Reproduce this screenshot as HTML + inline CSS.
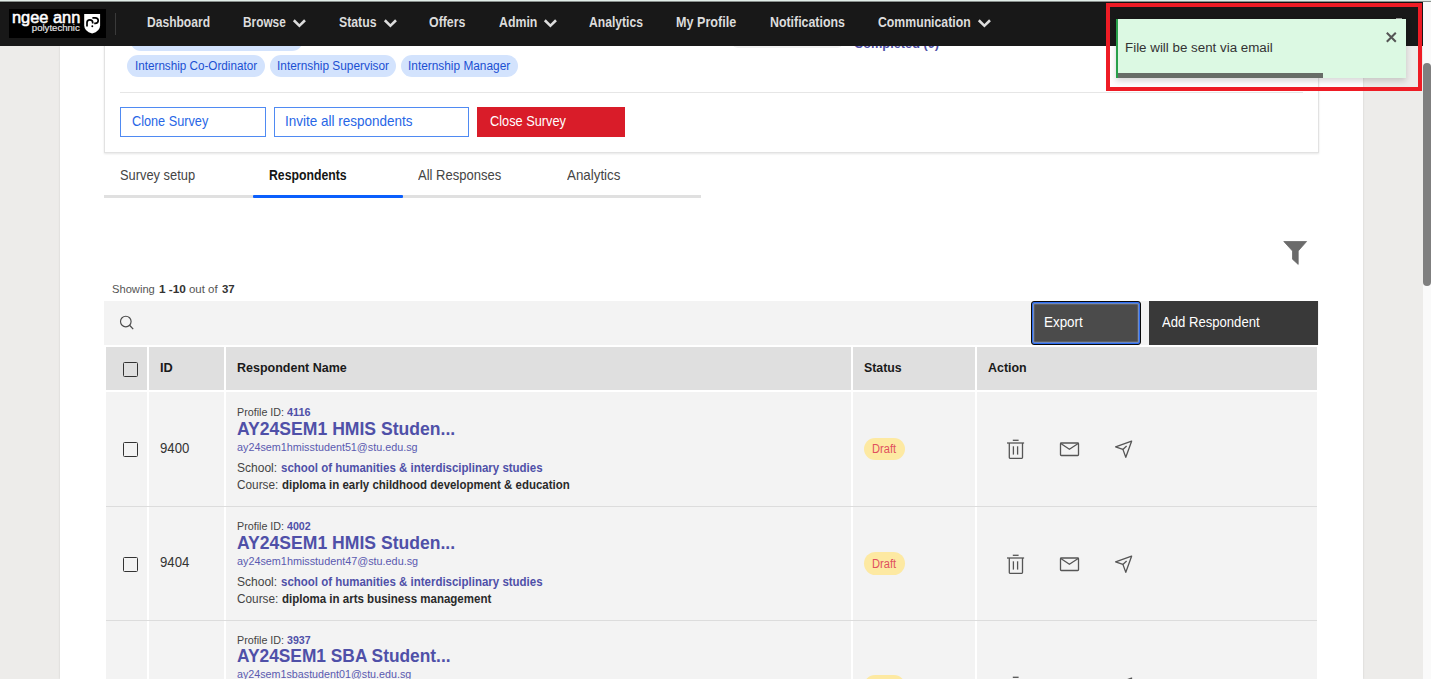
<!DOCTYPE html>
<html><head><meta charset="utf-8"><style>
html,body{margin:0;padding:0;width:1431px;height:679px;overflow:hidden;background:#ededed;font-family:"Liberation Sans", sans-serif;}
.t{position:absolute;white-space:nowrap;line-height:1;transform-origin:0 0;}
.r{position:absolute;}
</style></head><body>
<div class="r" style="left:0.00px;top:0.00px;width:1423.00px;height:679.00px;background:#edecea;"></div>
<div class="r" style="left:60.00px;top:46.00px;width:1303.00px;height:633.00px;background:#ffffff;box-shadow:0 0 2px rgba(0,0,0,0.12);"></div>
<div class="r" style="left:1423.00px;top:0.00px;width:8.00px;height:679.00px;background:#fafafa;"></div>
<div class="r" style="left:1423.00px;top:62.80px;width:8.00px;height:222.80px;background:#7f7f7f;border-radius:4px;"></div>
<div class="r" style="left:104.00px;top:20.00px;width:1215.00px;height:132.50px;background:#ffffff;border:1px solid #e2e2e2;box-sizing:border-box;box-shadow:0 1px 2px rgba(0,0,0,0.10);"></div>
<div class="r" style="left:130.00px;top:28.50px;width:172.50px;height:22.50px;background:#d3e3fd;border-radius:11px;"></div>
<div class="r" style="left:732.00px;top:30.00px;width:111.00px;height:18.00px;background:#f1f1f1;border-radius:6px;"></div>
<div class="t" style="left:853.60px;top:37.00px;font-size:13.5px;font-weight:bold;color:#4e4fa6;transform:scaleX(0.9452);">Completed (0)</div>
<div class="r" style="left:127.40px;top:54.50px;width:137.90px;height:22.50px;background:#d3e3fd;border-radius:11.5px;"></div>
<div class="t" style="left:134.73px;top:60.00px;font-size:12.0px;font-weight:normal;color:#1b4fd2;transform:scaleX(0.9735);">Internship Co-Ordinator</div>
<div class="r" style="left:270.20px;top:54.50px;width:126.20px;height:22.50px;background:#d3e3fd;border-radius:11.5px;"></div>
<div class="t" style="left:276.61px;top:60.00px;font-size:12.0px;font-weight:normal;color:#1b4fd2;transform:scaleX(0.9876);">Internship Supervisor</div>
<div class="r" style="left:401.30px;top:54.50px;width:116.70px;height:22.50px;background:#d3e3fd;border-radius:11.5px;"></div>
<div class="t" style="left:407.71px;top:60.00px;font-size:12.0px;font-weight:normal;color:#1b4fd2;transform:scaleX(0.9883);">Internship Manager</div>
<div class="r" style="left:120.00px;top:92.00px;width:1183.00px;height:1.00px;background:#e6e6e6;"></div>
<div class="r" style="left:120.00px;top:107.00px;width:146.00px;height:30.00px;background:#ffffff;border:1px solid #4f8af2;box-sizing:border-box;"></div>
<div class="t" style="left:132.30px;top:115.00px;font-size:13.9px;font-weight:normal;color:#2766e6;transform:scaleX(0.9144);">Clone Survey</div>
<div class="r" style="left:274.00px;top:107.00px;width:195.00px;height:30.00px;background:#ffffff;border:1px solid #4f8af2;box-sizing:border-box;"></div>
<div class="t" style="left:284.53px;top:115.00px;font-size:13.9px;font-weight:normal;color:#2766e6;transform:scaleX(0.9707);">Invite all respondents</div>
<div class="r" style="left:477.00px;top:107.00px;width:148.00px;height:30.00px;background:#d91c29;"></div>
<div class="t" style="left:490.30px;top:115.00px;font-size:13.9px;font-weight:normal;color:#ffffff;transform:scaleX(0.9194);">Close Survey</div>
<div class="r" style="left:104.00px;top:195.20px;width:597.00px;height:3.00px;background:#e0e0e0;"></div>
<div class="r" style="left:253.20px;top:195.00px;width:149.80px;height:3.10px;background:#0b5ffd;border-radius:1px;"></div>
<div class="t" style="left:119.70px;top:169.00px;font-size:13.9px;font-weight:normal;color:#444;transform:scaleX(0.9257);">Survey setup</div>
<div class="t" style="left:268.90px;top:169.00px;font-size:13.9px;font-weight:bold;color:#151515;transform:scaleX(0.8826);">Respondents</div>
<div class="t" style="left:417.90px;top:169.00px;font-size:13.9px;font-weight:normal;color:#444;transform:scaleX(0.9365);">All Responses</div>
<div class="t" style="left:567.30px;top:169.00px;font-size:13.9px;font-weight:normal;color:#444;transform:scaleX(0.9616);">Analytics</div>
<svg class="r" style="left:1280px;top:238px" width="30" height="30" viewBox="1280 238 30 30"><polygon points="1283.8,241.5 1306.6,241.5 1298.2,251 1298.2,264.4 1292.5,259.2 1292.5,251" fill="#6b6b6b" stroke="#6b6b6b" stroke-width="0.8" stroke-linejoin="round"/></svg>
<div class="t" style="left:112.10px;top:284.00px;font-size:11.0px;font-weight:normal;color:#555;transform:scaleX(1.0148);">Showing</div>
<div class="t" style="left:158.70px;top:284.00px;font-size:11.0px;font-weight:bold;color:#333;transform:scaleX(1.0740);">1 -10</div>
<div class="t" style="left:188.90px;top:284.00px;font-size:11.0px;font-weight:normal;color:#555;transform:scaleX(1.0399);">out of</div>
<div class="t" style="left:221.60px;top:284.00px;font-size:11.0px;font-weight:bold;color:#333;transform:scaleX(1.0398);">37</div>
<div class="r" style="left:104.00px;top:300.70px;width:1215.00px;height:44.30px;background:#f3f3f3;"></div>
<svg class="r" style="left:115px;top:312px" width="24" height="24" viewBox="115 312 24 24"><circle cx="125.8" cy="321.5" r="5.3" fill="none" stroke="#4a4a4a" stroke-width="1.15"/><line x1="129.6" y1="325.3" x2="133.2" y2="329.1" stroke="#4a4a4a" stroke-width="1.25"/></svg>
<div class="r" style="left:1031.20px;top:300.60px;width:110.20px;height:44.40px;background:#4b4b4b;border:1.6px solid #0a0a0a;box-sizing:border-box;box-shadow:inset 0 0 0 1.4px #2c6cf0, inset 0 0 0 2.2px rgba(240,235,225,0.55);border-radius:3px;"></div>
<div class="t" style="left:1043.95px;top:315.00px;font-size:14.1px;font-weight:normal;color:#ffffff;transform:scaleX(0.9519);">Export</div>
<div class="r" style="left:1149.30px;top:300.80px;width:169.00px;height:44.40px;background:#393939;"></div>
<div class="t" style="left:1162.30px;top:315.00px;font-size:14.1px;font-weight:normal;color:#ffffff;transform:scaleX(0.9297);">Add Respondent</div>
<div class="r" style="left:106.00px;top:347.00px;width:41.00px;height:43.00px;background:#dfdfdf;"></div>
<div class="r" style="left:148.50px;top:347.00px;width:75.50px;height:43.00px;background:#dfdfdf;"></div>
<div class="r" style="left:225.50px;top:347.00px;width:625.50px;height:43.00px;background:#dfdfdf;"></div>
<div class="r" style="left:852.50px;top:347.00px;width:122.50px;height:43.00px;background:#dfdfdf;"></div>
<div class="r" style="left:976.50px;top:347.00px;width:340.50px;height:43.00px;background:#dfdfdf;"></div>
<div class="r" style="left:123.00px;top:362.00px;width:15.00px;height:15.00px;background:transparent;border:1.5px solid #333;box-sizing:border-box;border-radius:1.5px;"></div>
<div class="t" style="left:159.80px;top:362.00px;font-size:12.6px;font-weight:bold;color:#1a1a1a;transform:scaleX(1.0161);">ID</div>
<div class="t" style="left:236.80px;top:362.00px;font-size:12.6px;font-weight:bold;color:#1a1a1a;transform:scaleX(0.9922);">Respondent Name</div>
<div class="t" style="left:863.80px;top:362.00px;font-size:12.6px;font-weight:bold;color:#1a1a1a;transform:scaleX(0.9796);">Status</div>
<div class="t" style="left:987.90px;top:362.00px;font-size:12.6px;font-weight:bold;color:#1a1a1a;transform:scaleX(0.9874);">Action</div>
<div class="r" style="left:106.00px;top:391.50px;width:41.00px;height:114.80px;background:#f3f3f3;"></div>
<div class="r" style="left:148.50px;top:391.50px;width:75.50px;height:114.80px;background:#f3f3f3;"></div>
<div class="r" style="left:225.50px;top:391.50px;width:625.50px;height:114.80px;background:#f3f3f3;"></div>
<div class="r" style="left:852.50px;top:391.50px;width:122.50px;height:114.80px;background:#f3f3f3;"></div>
<div class="r" style="left:976.50px;top:391.50px;width:340.50px;height:114.80px;background:#f3f3f3;"></div>
<div class="r" style="left:106.00px;top:506.30px;width:1211.00px;height:1.00px;background:#dcdcdc;"></div>
<div class="r" style="left:123.00px;top:442.30px;width:15.00px;height:15.00px;background:transparent;border:1.5px solid #333;box-sizing:border-box;border-radius:1.5px;"></div>
<div class="t" style="left:159.80px;top:441.00px;font-size:14.0px;font-weight:normal;color:#333;transform:scaleX(0.9407);">9400</div>
<div class="t" style="left:236.70px;top:408.00px;font-size:10.2px;font-weight:normal;color:#444;transform:scaleX(1.0525);">Profile ID:</div>
<div class="t" style="left:287.40px;top:408.00px;font-size:10.2px;font-weight:bold;color:#4f50a8;transform:scaleX(1.0698);">4116</div>
<div class="t" style="left:236.70px;top:421.00px;font-size:17.7px;font-weight:bold;color:#4f50a8;transform:scaleX(0.9941);">AY24SEM1 HMIS Studen...</div>
<div class="t" style="left:236.70px;top:442.00px;font-size:11.3px;font-weight:normal;color:#5a5ab0;transform:scaleX(0.9544);">ay24sem1hmisstudent51@stu.edu.sg</div>
<div class="t" style="left:236.80px;top:462.00px;font-size:12.0px;font-weight:normal;color:#444;transform:scaleX(1.0027);">School:</div>
<div class="t" style="left:280.80px;top:462.00px;font-size:12.0px;font-weight:bold;color:#4f50a8;transform:scaleX(0.9568);">school of humanities &amp; interdisciplinary studies</div>
<div class="t" style="left:236.80px;top:479.00px;font-size:12.0px;font-weight:normal;color:#444;transform:scaleX(0.9836);">Course:</div>
<div class="t" style="left:282.40px;top:479.00px;font-size:12.0px;font-weight:bold;color:#2a2a2a;transform:scaleX(0.9544);">diploma in early childhood development &amp; education</div>
<div class="r" style="left:863.50px;top:437.70px;width:41.30px;height:22.60px;background:#fde9a2;border-radius:11.5px;"></div>
<div class="t" style="left:871.50px;top:443.00px;font-size:12.0px;font-weight:normal;color:#e0505e;transform:scaleX(0.9261);">Draft</div>
<svg class="r" style="left:1000px;top:435.00px" width="140" height="28" viewBox="1000 435 140 28" fill="none" stroke="#555" stroke-width="1.3" stroke-linejoin="round">
<line x1="1012.8" y1="440.3" x2="1018.6" y2="440.3"/>
<line x1="1007" y1="443" x2="1024.1" y2="443"/>
<path d="M1009.3 443 V457.6 Q1009.3 458.3 1010 458.3 H1021.8 Q1022.5 458.3 1022.5 457.6 V443"/>
<line x1="1013.4" y1="446.3" x2="1013.4" y2="454.6"/>
<line x1="1017.6" y1="446.3" x2="1017.6" y2="454.6"/>
<rect x="1060.5" y="443" width="18" height="12.5" rx="0.8"/>
<polyline points="1060.8,443.5 1069.4,449.3 1078.2,443.5"/>
<path d="M1131.6 441.2 L1115.6 446.9 L1122.9 449.4 L1125.8 457.3 Z"/>
<line x1="1122.9" y1="449.4" x2="1126.6" y2="446"/>
</svg>
<div class="r" style="left:106.00px;top:507.30px;width:41.00px;height:112.70px;background:#f3f3f3;"></div>
<div class="r" style="left:148.50px;top:507.30px;width:75.50px;height:112.70px;background:#f3f3f3;"></div>
<div class="r" style="left:225.50px;top:507.30px;width:625.50px;height:112.70px;background:#f3f3f3;"></div>
<div class="r" style="left:852.50px;top:507.30px;width:122.50px;height:112.70px;background:#f3f3f3;"></div>
<div class="r" style="left:976.50px;top:507.30px;width:340.50px;height:112.70px;background:#f3f3f3;"></div>
<div class="r" style="left:106.00px;top:620.00px;width:1211.00px;height:1.00px;background:#dcdcdc;"></div>
<div class="r" style="left:123.00px;top:556.80px;width:15.00px;height:15.00px;background:transparent;border:1.5px solid #333;box-sizing:border-box;border-radius:1.5px;"></div>
<div class="t" style="left:159.80px;top:555.00px;font-size:14.0px;font-weight:normal;color:#333;transform:scaleX(0.9407);">9404</div>
<div class="t" style="left:236.70px;top:522.00px;font-size:10.2px;font-weight:normal;color:#444;transform:scaleX(1.0525);">Profile ID:</div>
<div class="t" style="left:287.40px;top:522.00px;font-size:10.2px;font-weight:bold;color:#4f50a8;transform:scaleX(1.0436);">4002</div>
<div class="t" style="left:236.70px;top:535.00px;font-size:17.7px;font-weight:bold;color:#4f50a8;transform:scaleX(0.9936);">AY24SEM1 HMIS Studen...</div>
<div class="t" style="left:236.70px;top:556.00px;font-size:11.3px;font-weight:normal;color:#5a5ab0;transform:scaleX(0.9571);">ay24sem1hmisstudent47@stu.edu.sg</div>
<div class="t" style="left:236.80px;top:576.00px;font-size:12.0px;font-weight:normal;color:#444;transform:scaleX(1.0027);">School:</div>
<div class="t" style="left:280.80px;top:576.00px;font-size:12.0px;font-weight:bold;color:#4f50a8;transform:scaleX(0.9568);">school of humanities &amp; interdisciplinary studies</div>
<div class="t" style="left:236.80px;top:593.00px;font-size:12.0px;font-weight:normal;color:#444;transform:scaleX(0.9836);">Course:</div>
<div class="t" style="left:282.40px;top:593.00px;font-size:12.0px;font-weight:bold;color:#2a2a2a;transform:scaleX(0.9598);">diploma in arts business management</div>
<div class="r" style="left:863.50px;top:552.20px;width:41.30px;height:22.60px;background:#fde9a2;border-radius:11.5px;"></div>
<div class="t" style="left:871.50px;top:558.00px;font-size:12.0px;font-weight:normal;color:#e0505e;transform:scaleX(0.9261);">Draft</div>
<svg class="r" style="left:1000px;top:549.50px" width="140" height="28" viewBox="1000 435 140 28" fill="none" stroke="#555" stroke-width="1.3" stroke-linejoin="round">
<line x1="1012.8" y1="440.3" x2="1018.6" y2="440.3"/>
<line x1="1007" y1="443" x2="1024.1" y2="443"/>
<path d="M1009.3 443 V457.6 Q1009.3 458.3 1010 458.3 H1021.8 Q1022.5 458.3 1022.5 457.6 V443"/>
<line x1="1013.4" y1="446.3" x2="1013.4" y2="454.6"/>
<line x1="1017.6" y1="446.3" x2="1017.6" y2="454.6"/>
<rect x="1060.5" y="443" width="18" height="12.5" rx="0.8"/>
<polyline points="1060.8,443.5 1069.4,449.3 1078.2,443.5"/>
<path d="M1131.6 441.2 L1115.6 446.9 L1122.9 449.4 L1125.8 457.3 Z"/>
<line x1="1122.9" y1="449.4" x2="1126.6" y2="446"/>
</svg>
<div class="r" style="left:106.00px;top:621.00px;width:41.00px;height:139.00px;background:#f3f3f3;"></div>
<div class="r" style="left:148.50px;top:621.00px;width:75.50px;height:139.00px;background:#f3f3f3;"></div>
<div class="r" style="left:225.50px;top:621.00px;width:625.50px;height:139.00px;background:#f3f3f3;"></div>
<div class="r" style="left:852.50px;top:621.00px;width:122.50px;height:139.00px;background:#f3f3f3;"></div>
<div class="r" style="left:976.50px;top:621.00px;width:340.50px;height:139.00px;background:#f3f3f3;"></div>
<div class="r" style="left:106.00px;top:760.00px;width:1211.00px;height:1.00px;background:#dcdcdc;"></div>
<div class="r" style="left:123.00px;top:679.30px;width:15.00px;height:15.00px;background:transparent;border:1.5px solid #333;box-sizing:border-box;border-radius:1.5px;"></div>
<div class="t" style="left:159.80px;top:678.00px;font-size:14.0px;font-weight:normal;color:#333;transform:scaleX(0.9407);">9401</div>
<div class="t" style="left:236.70px;top:636.00px;font-size:10.2px;font-weight:normal;color:#444;transform:scaleX(1.0525);">Profile ID:</div>
<div class="t" style="left:287.40px;top:636.00px;font-size:10.2px;font-weight:bold;color:#4f50a8;transform:scaleX(1.0436);">3937</div>
<div class="t" style="left:236.70px;top:648.00px;font-size:17.7px;font-weight:bold;color:#4f50a8;transform:scaleX(0.9802);">AY24SEM1 SBA Student...</div>
<div class="t" style="left:236.70px;top:669.00px;font-size:11.3px;font-weight:normal;color:#5a5ab0;transform:scaleX(0.9494);">ay24sem1sbastudent01@stu.edu.sg</div>
<div class="t" style="left:236.80px;top:689.00px;font-size:12.0px;font-weight:normal;color:#444;transform:scaleX(1.0027);">School:</div>
<div class="r" style="left:863.50px;top:674.70px;width:41.30px;height:22.60px;background:#fde9a2;border-radius:11.5px;"></div>
<div class="t" style="left:871.50px;top:680.00px;font-size:12.0px;font-weight:normal;color:#e0505e;transform:scaleX(0.9261);">Draft</div>
<svg class="r" style="left:1000px;top:672.00px" width="140" height="28" viewBox="1000 435 140 28" fill="none" stroke="#555" stroke-width="1.3" stroke-linejoin="round">
<line x1="1012.8" y1="440.3" x2="1018.6" y2="440.3"/>
<line x1="1007" y1="443" x2="1024.1" y2="443"/>
<path d="M1009.3 443 V457.6 Q1009.3 458.3 1010 458.3 H1021.8 Q1022.5 458.3 1022.5 457.6 V443"/>
<line x1="1013.4" y1="446.3" x2="1013.4" y2="454.6"/>
<line x1="1017.6" y1="446.3" x2="1017.6" y2="454.6"/>
<rect x="1060.5" y="443" width="18" height="12.5" rx="0.8"/>
<polyline points="1060.8,443.5 1069.4,449.3 1078.2,443.5"/>
<path d="M1131.6 441.2 L1115.6 446.9 L1122.9 449.4 L1125.8 457.3 Z"/>
<line x1="1122.9" y1="449.4" x2="1126.6" y2="446"/>
</svg>
<div class="r" style="left:0.00px;top:0.00px;width:1431.00px;height:1.00px;background:#e2ede8;"></div>
<div class="r" style="left:0.00px;top:1.00px;width:1431.00px;height:1.00px;background:#8a908d;"></div>
<div class="r" style="left:0.00px;top:2.00px;width:1423.00px;height:44.00px;background:#181818;border-top:1px solid #121212;box-sizing:border-box;"></div>
<div class="r" style="left:9.00px;top:9.00px;width:97.00px;height:29.00px;background:#000000;"></div>
<div class="t" style="left:12.02px;top:10.00px;font-size:16.8px;font-weight:normal;color:#ffffff;transform:scaleX(0.9758);-webkit-text-stroke:0.55px #fff;">ngee ann</div>
<div class="t" style="left:31.80px;top:23.00px;font-size:9.6px;font-weight:normal;color:#e8e8e8;transform:scaleX(1.0000);-webkit-text-stroke:0.15px #e8e8e8;">polytechnic</div>
<svg class="r" style="left:82px;top:12px" width="21" height="24" viewBox="82 12 21 24">
<path d="M84.2 13.9 H100.1 V25.5 Q100.1 31.2 92.15 33.6 Q84.2 31.2 84.2 25.5 Z" fill="#fff"/>
<path d="M87 26.6 V22.6 Q87 19.8 89.85 19.8 Q92.7 19.8 92.7 22.6 V23.6" fill="none" stroke="#000" stroke-width="1.7"/>
<path d="M92.4 17.8 H95.2 Q98.2 17.8 98.2 20.55 Q98.2 23.3 95.2 23.3 H94.2" fill="none" stroke="#000" stroke-width="1.7"/>
<circle cx="92.3" cy="26.3" r="0.95" fill="#000"/>
</svg>
<div class="r" style="left:115.00px;top:13.00px;width:1.00px;height:22.00px;background:#3a3a3a;"></div>
<div class="t" style="left:146.50px;top:15.00px;font-size:14.1px;font-weight:bold;color:#dcdcdc;transform:scaleX(0.8561);">Dashboard</div>
<div class="t" style="left:242.60px;top:15.00px;font-size:14.1px;font-weight:bold;color:#dcdcdc;transform:scaleX(0.8400);">Browse</div>
<svg class="r" style="left:292.0px;top:17px" width="15" height="13" viewBox="0 0 15 13"><polygon points="0.9,4.3 2.7,2.3 7.4,6.9 12.1,2.3 13.9,4.3 7.4,10.4" fill="#dcdcdc"/></svg>
<div class="t" style="left:338.60px;top:15.00px;font-size:14.1px;font-weight:bold;color:#dcdcdc;transform:scaleX(0.8720);">Status</div>
<svg class="r" style="left:383.0px;top:17px" width="15" height="13" viewBox="0 0 15 13"><polygon points="0.9,4.3 2.7,2.3 7.4,6.9 12.1,2.3 13.9,4.3 7.4,10.4" fill="#dcdcdc"/></svg>
<div class="t" style="left:428.90px;top:15.00px;font-size:14.1px;font-weight:bold;color:#dcdcdc;transform:scaleX(0.8783);">Offers</div>
<div class="t" style="left:498.50px;top:15.00px;font-size:14.1px;font-weight:bold;color:#dcdcdc;transform:scaleX(0.8743);">Admin</div>
<svg class="r" style="left:542.6px;top:17px" width="15" height="13" viewBox="0 0 15 13"><polygon points="0.9,4.3 2.7,2.3 7.4,6.9 12.1,2.3 13.9,4.3 7.4,10.4" fill="#dcdcdc"/></svg>
<div class="t" style="left:589.10px;top:15.00px;font-size:14.1px;font-weight:bold;color:#dcdcdc;transform:scaleX(0.8611);">Analytics</div>
<div class="t" style="left:676.20px;top:15.00px;font-size:14.1px;font-weight:bold;color:#dcdcdc;transform:scaleX(0.8932);">My Profile</div>
<div class="t" style="left:769.80px;top:15.00px;font-size:14.1px;font-weight:bold;color:#dcdcdc;transform:scaleX(0.8771);">Notifications</div>
<div class="t" style="left:877.90px;top:15.00px;font-size:14.1px;font-weight:bold;color:#dcdcdc;transform:scaleX(0.8699);">Communication</div>
<svg class="r" style="left:977.4px;top:17px" width="15" height="13" viewBox="0 0 15 13"><polygon points="0.9,4.3 2.7,2.3 7.4,6.9 12.1,2.3 13.9,4.3 7.4,10.4" fill="#dcdcdc"/></svg>
<div class="r" style="left:1396.00px;top:17.50px;width:6.00px;height:1.50px;background:#9a9a9a;"></div>
<div class="r" style="left:1115.80px;top:19.00px;width:290.70px;height:59.00px;background:#dcf9e3;box-shadow:0 3px 6px rgba(0,0,0,0.16);"></div>
<div class="r" style="left:1115.80px;top:19.00px;width:2.30px;height:59.00px;background:#27a04a;"></div>
<div class="r" style="left:1118.00px;top:73.00px;width:205.00px;height:5.00px;background:#676d67;"></div>
<div class="t" style="left:1124.72px;top:41.00px;font-size:13.7px;font-weight:normal;color:#333;transform:scaleX(0.9758);">File will be sent via email</div>
<svg class="r" style="left:1385px;top:31px" width="13" height="13" viewBox="0 0 13 13"><path d="M1.8 1.8 L10.8 10.8 M10.8 1.8 L1.8 10.8" stroke="#555" stroke-width="2"/></svg>
<div class="r" style="left:1106.00px;top:3.00px;width:315.50px;height:88.00px;background:transparent;border:4.2px solid #ee1c25;box-sizing:border-box;"></div>
</body></html>
